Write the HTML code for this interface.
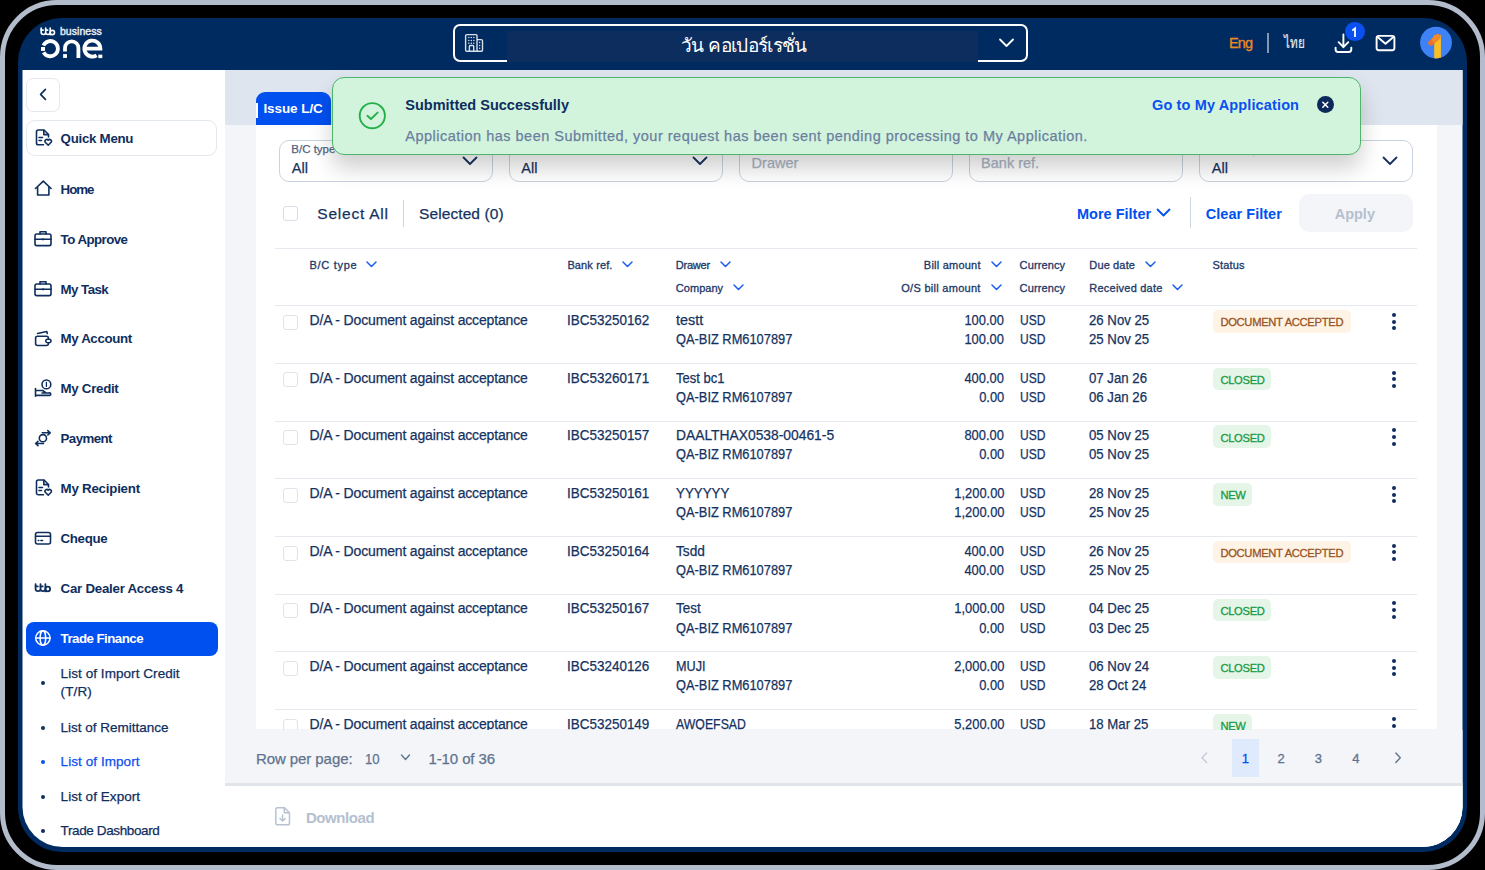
<!DOCTYPE html>
<html><head><meta charset="utf-8"><style>
html,body{margin:0;padding:0;width:1485px;height:870px;overflow:hidden;background:#000}
body{position:relative;font-family:"Liberation Sans",sans-serif}
.t,.tc{position:absolute;white-space:nowrap;line-height:1}
</style></head><body>
<div style="position:absolute;left:0;top:0;width:1485px;height:870px;box-sizing:border-box;border:5px solid #b2bccb;border-radius:57px;background:#000"></div>
<div style="position:absolute;left:18px;top:18px;width:1449px;height:834px;border-radius:44px;background:#002b60"></div>
<svg style="position:absolute;left:36px;top:24px" width="70" height="38" viewBox="36 24 70 38">
<g fill="none" stroke="#fff" stroke-width="3.8">
<path d="M43.38 45.5 A7.6 7.6 0 1 1 43.63 52.3"/>
<path d="M65 51.6 V48 A6.7 6.7 0 0 1 78.4 48 V57.9"/>
<path d="M86 48.6 H100.4 A8 8 0 1 0 96.6 55.4"/>
</g>
<g fill="#fff">
<rect x="41" y="47" width="4" height="3.9"/>
<rect x="63.1" y="54.1" width="3.9" height="3.8"/>
<rect x="98.3" y="54.6" width="4" height="3.5"/>
</g>
</svg>
<svg style="position:absolute;left:38px;top:25px" width="22" height="14" viewBox="38 25 22 14" fill="none" stroke="#fff" stroke-width="1.75" stroke-linecap="round"><g transform="translate(40.45 27.9) scale(0.92)"><path d="M0.8 0.2 V5 A2.45 2.1 0 0 0 5.7 5 V0.2 M5.7 5 A2.45 2.1 0 0 0 10.6 5 V0.2 M10.6 0.2 V7.4"/><circle cx="12.95" cy="5" r="2.35"/><path d="M0.8 2.4 H3 M5.7 2.4 H7.9"/></g></svg>
<div class="t" style="top:26.21px;font-size:10.5px;font-weight:400;color:#e8edf5;letter-spacing:0.032px;left:60.00px;-webkit-text-stroke:0.4px #e8edf5;">business</div>
<div style="position:absolute;left:453px;top:24px;width:575px;height:38px;box-sizing:border-box;border:2px solid #fff;border-radius:7px"></div>
<div style="position:absolute;left:507px;top:31px;width:471px;height:31px;background:#0c2d5d;"></div>
<svg style="position:absolute;left:460px;top:30px" width="28" height="26" viewBox="460 30 28 26" fill="none" stroke="#d9dfe9" stroke-width="1.4" stroke-linejoin="round">
<path d="M477 51.3 H466.8 A1.2 1.2 0 0 1 465.6 50.1 V35.8 A1.2 1.2 0 0 1 466.8 34.6 H475.8 A1.2 1.2 0 0 1 477 35.8 Z"/>
<path d="M477 39.6 H481.3 A1.2 1.2 0 0 1 482.5 40.8 V50.1 A1.2 1.2 0 0 1 481.3 51.3 H477"/>
<path d="M469.4 51.3 V46.3 A0.8 0.8 0 0 1 470.2 45.5 H472.9 A0.8 0.8 0 0 1 473.7 46.3 V51.3"/>
<g fill="#d9dfe9" stroke="none">
<circle cx="468.8" cy="37.6" r="0.75"/><circle cx="471.3" cy="37.6" r="0.75"/><circle cx="473.8" cy="37.6" r="0.75"/>
<circle cx="468.8" cy="40.4" r="0.75"/><circle cx="471.3" cy="40.4" r="0.75"/><circle cx="473.8" cy="40.4" r="0.75"/>
<circle cx="468.8" cy="43.2" r="0.75"/><circle cx="471.3" cy="43.2" r="0.75"/><circle cx="473.8" cy="43.2" r="0.75"/>
<circle cx="479.6" cy="42.5" r="0.75"/><circle cx="479.6" cy="45.4" r="0.75"/><circle cx="479.6" cy="48.3" r="0.75"/>
</g></svg>
<div class="t" style="top:36.42px;font-size:19px;font-weight:400;color:#fff;letter-spacing:-0.667px;left:681.00px;">วัน คอเปอร์เรชั่น</div>
<svg style="position:absolute;left:998px;top:37px" width="17" height="12" viewBox="0 0 17 12"><path d="M2 2.5 L8.5 9 L15 2.5" fill="none" stroke="#fff" stroke-width="1.8" stroke-linecap="round" stroke-linejoin="round"/></svg>
<div class="t" style="top:36.03px;font-size:14.5px;font-weight:400;color:#ec8a26;letter-spacing:-0.900px;left:1229.00px;-webkit-text-stroke:0.3px #ec8a26;">Eng</div>
<div style="position:absolute;left:1267.3px;top:32.5px;width:1.5px;height:20px;background:#8596b0;"></div>
<div class="t" style="top:35.18px;font-size:15.5px;font-weight:400;color:#e3e8f0;left:1284.00px;-webkit-text-stroke:0.2px #e3e8f0;transform:scaleX(0.7549);transform-origin:0 0;">ไทย</div>
<svg style="position:absolute;left:1330px;top:30px" width="26" height="26" viewBox="1330 30 26 26" fill="none" stroke="#fff" stroke-width="1.9" stroke-linecap="round" stroke-linejoin="round">
<path d="M1343.4 34.5 V47.2 M1338.6 42.2 L1343.4 47.2 L1348.3 42.2"/><path d="M1335.6 47.6 V49.6 A2.4 2.4 0 0 0 1338 52 H1348.9 A2.4 2.4 0 0 0 1351.3 49.6 V47.6"/></svg>
<div style="position:absolute;left:1345.2px;top:22.1px;width:19.4px;height:19.4px;border-radius:50%;background:#0a50f0"></div>
<svg style="position:absolute;left:1348px;top:25px" width="12" height="14" viewBox="1348 25 12 14"><path d="M1353 29.9 L1355 28.4 V36" fill="none" stroke="#fff" stroke-width="1.8" stroke-linecap="square" stroke-linejoin="miter"/></svg>
<svg style="position:absolute;left:1372px;top:31px" width="27" height="24" viewBox="1372 31 27 24" fill="none" stroke="#fff" stroke-width="1.9" stroke-linejoin="round">
<rect x="1376.6" y="35.9" width="17.8" height="14.4" rx="2.2"/><path d="M1377.6 37 L1385.5 43.8 L1393.4 37" stroke-linecap="round"/></svg>
<svg style="position:absolute;left:1419px;top:26px" width="34" height="34" viewBox="0 0 34 34">
<defs><clipPath id="av"><circle cx="17" cy="16.6" r="15.9"/></clipPath></defs>
<circle cx="17" cy="16.6" r="15.9" fill="#3f82f7"/>
<g clip-path="url(#av)">
<rect x="15.2" y="9" width="6.7" height="26" fill="#fbbf24"/>
<path d="M11.8 17 L18.8 10.8" stroke="#ec6f2d" stroke-width="5.2" stroke-linecap="round"/>
<path d="M15.2 13.8 L18.8 10.8" stroke="#f08a2a" stroke-width="5.2" stroke-linecap="round"/>
</g></svg>
<div style="position:absolute;left:0;top:0;width:1485px;height:870px;clip-path:inset(70px 22.5px 23px 22.5px round 0 0 40px 40px)">
<div style="position:absolute;left:0px;top:0px;width:225px;height:870px;background:#fff;"></div>
<div style="position:absolute;left:225px;top:70px;width:1260px;height:800px;background:#f3f5f8;"></div>
<div style="position:absolute;left:225px;top:70px;width:1260px;height:54.5px;background:#dfe5ee;"></div>
<div style="position:absolute;left:26px;top:77.5px;width:34px;height:34px;box-sizing:border-box;border:1px solid #e3e8ef;border-radius:7px"></div>
<svg style="position:absolute;left:36px;top:86px" width="14" height="16" viewBox="36 86 14 16"><path d="M45.4 89.4 L40.6 94.3 L45.4 99.3" fill="none" stroke="#0f2e5e" stroke-width="1.7" stroke-linecap="round" stroke-linejoin="round"/></svg>
<div style="position:absolute;left:26px;top:120px;width:191px;height:36px;box-sizing:border-box;border:1px solid #e3e8ef;border-radius:9px"></div>
<svg style="position:absolute;left:33px;top:128px" width="22" height="20" viewBox="33 128 22 20" fill="none" stroke="#0f2e5e" stroke-width="1.6" stroke-linecap="round" stroke-linejoin="round"><path d="M43.5 144.8 H38.3 A1.8 1.8 0 0 1 36.5 143 V131.8 A1.8 1.8 0 0 1 38.3 130 H44 L48.5 134.5 V137"/>
<path d="M43.8 130.2 V134.6 H48.3"/><path d="M39 137.5 H42.5 M39 140.5 H41.5"/>
<path d="M48.2 145.2 L45.3 142.3 A1.7 1.7 0 0 1 48.2 140.2 A1.7 1.7 0 0 1 51.1 142.3 Z"/></svg>
<svg style="position:absolute;left:33px;top:178px" width="22" height="20" viewBox="33 178 22 20" fill="none" stroke="#0f2e5e" stroke-width="1.6" stroke-linecap="round" stroke-linejoin="round"><path d="M35.5 188.5 L43.3 181.2 L51.1 188.5"/><path d="M37.6 187.2 V195 H48.9 V187.2"/></svg>
<svg style="position:absolute;left:32px;top:229px" width="22" height="20" viewBox="32 229 22 20" fill="none" stroke="#0f2e5e" stroke-width="1.6" stroke-linecap="round" stroke-linejoin="round"><rect x="35" y="234" width="16" height="11.6" rx="1.8"/><path d="M40 234 V231.8 H46 V234"/><path d="M35 239.2 H51"/><path d="M42.3 239.3 H43.7" stroke-width="1.8"/></svg>
<svg style="position:absolute;left:32px;top:279px" width="22" height="20" viewBox="32 279 22 20" fill="none" stroke="#0f2e5e" stroke-width="1.6" stroke-linecap="round" stroke-linejoin="round"><rect x="35" y="284" width="16" height="11.6" rx="1.8"/><path d="M40 284 V281.8 H46 V284"/><path d="M35 289.2 H51"/><path d="M42.3 289.3 H43.7" stroke-width="1.8"/></svg>
<svg style="position:absolute;left:32px;top:328px" width="22" height="20" viewBox="32 328 22 20" fill="none" stroke="#0f2e5e" stroke-width="1.6" stroke-linecap="round" stroke-linejoin="round"><rect x="35.6" y="336.2" width="12.8" height="9.3" rx="2"/><rect x="45.8" y="339.3" width="5.2" height="3.4" rx="1.7" fill="#fff"/><path d="M37.6 333.5 L46.8 331.5 L47.3 333.5"/></svg>
<svg style="position:absolute;left:32px;top:377px" width="22" height="22" viewBox="32 377 22 22" fill="none" stroke="#0f2e5e" stroke-width="1.6" stroke-linecap="round" stroke-linejoin="round"><circle cx="46.4" cy="384.4" r="4.4"/><path d="M46.4 382.4 V386.4" stroke-width="1.3"/><path d="M35.5 388.5 V396.3 M35.5 390.5 H42.6 L46 393 H48.8 A1.3 1.3 0 0 1 50 395.4 H35.5 M42 393 H46"/></svg>
<svg style="position:absolute;left:32px;top:428px" width="22" height="20" viewBox="32 428 22 20" fill="none" stroke="#0f2e5e" stroke-width="1.6" stroke-linecap="round" stroke-linejoin="round"><circle cx="42.9" cy="438.2" r="3.6"/><path d="M42.3 432.8 H50 M47.8 430.6 L50.2 432.8 L47.8 435 M43.5 443.5 H35.8 M38 441.3 L35.6 443.5 L38 445.7"/></svg>
<svg style="position:absolute;left:33px;top:478px" width="22" height="20" viewBox="33 478 22 20" fill="none" stroke="#0f2e5e" stroke-width="1.6" stroke-linecap="round" stroke-linejoin="round"><path d="M43.5 494.8 H38.3 A1.8 1.8 0 0 1 36.5 493 V481.8 A1.8 1.8 0 0 1 38.3 480 H44 L48.5 484.5 V487"/>
<path d="M43.8 480.2 V484.6 H48.3"/><path d="M39 487.5 H42.5 M39 490.5 H41.5"/>
<path d="M48.2 495.2 L45.3 492.3 A1.7 1.7 0 0 1 48.2 490.2 A1.7 1.7 0 0 1 51.1 492.3 Z"/></svg>
<svg style="position:absolute;left:32px;top:530px" width="22" height="17" viewBox="32 530 22 17" fill="none" stroke="#0f2e5e" stroke-width="1.6" stroke-linecap="round" stroke-linejoin="round"><rect x="35.5" y="532.5" width="15" height="11.5" rx="2"/><path d="M35.6 536.3 H50.4"/><path d="M38.2 540.5 H38.8 M40.8 540.5 H42.6" stroke-width="1.4"/></svg>
<svg style="position:absolute;left:32px;top:581px" width="22" height="14" viewBox="32 581 22 14" fill="none" stroke="#0f2e5e" stroke-width="1.8" stroke-linecap="round" stroke-linejoin="round"><path d="M35.6 584.2 V589 A2.45 2.1 0 0 0 40.5 589 V584.2 M40.5 589 A2.45 2.1 0 0 0 45.4 589 V584.2 M45.4 584.2 V591.4"/><circle cx="47.75" cy="589" r="2.35"/><path d="M35.6 586.4 H37.8 M40.5 586.4 H42.7"/></svg>
<div style="position:absolute;left:25.5px;top:621.5px;width:192px;height:34.5px;border-radius:8px;background:#0050f0"></div>
<svg style="position:absolute;left:33px;top:628px" width="20" height="20" viewBox="33 628 20 20" fill="none" stroke="#fff" stroke-width="1.5" stroke-linecap="round" stroke-linejoin="round"><circle cx="42.9" cy="638" r="7.2"/><ellipse cx="42.9" cy="638" rx="2.8" ry="7.2"/><path d="M35.8 638 H50"/></svg>
<div class="t" style="top:131.74px;font-size:13.3px;font-weight:700;color:#0f2e5e;letter-spacing:-0.277px;left:60.60px;">Quick Menu</div>
<div class="t" style="top:182.74px;font-size:13.3px;font-weight:700;color:#0f2e5e;letter-spacing:-1.070px;left:60.60px;">Home</div>
<div class="t" style="top:233.14px;font-size:13.3px;font-weight:700;color:#0f2e5e;letter-spacing:-0.555px;left:60.60px;">To Approve</div>
<div class="t" style="top:282.94px;font-size:13.3px;font-weight:700;color:#0f2e5e;letter-spacing:-0.561px;left:60.60px;">My Task</div>
<div class="t" style="top:332.44px;font-size:13.3px;font-weight:700;color:#0f2e5e;letter-spacing:-0.376px;left:60.60px;">My Account</div>
<div class="t" style="top:382.44px;font-size:13.3px;font-weight:700;color:#0f2e5e;letter-spacing:-0.300px;left:60.60px;">My Credit</div>
<div class="t" style="top:432.14px;font-size:13.3px;font-weight:700;color:#0f2e5e;letter-spacing:-0.606px;left:60.60px;">Payment</div>
<div class="t" style="top:482.44px;font-size:13.3px;font-weight:700;color:#0f2e5e;letter-spacing:-0.230px;left:60.60px;">My Recipient</div>
<div class="t" style="top:532.44px;font-size:13.3px;font-weight:700;color:#0f2e5e;letter-spacing:-0.360px;left:60.60px;">Cheque</div>
<div class="t" style="top:582.44px;font-size:13.3px;font-weight:700;color:#0f2e5e;letter-spacing:-0.257px;left:60.60px;">Car Dealer Access 4</div>
<div class="t" style="top:632.14px;font-size:13.3px;font-weight:700;color:#fff;letter-spacing:-0.539px;left:60.60px;">Trade Finance</div>
<div class="t" style="top:667.17px;font-size:13.5px;font-weight:400;color:#0f2e5e;letter-spacing:0.060px;left:60.60px;-webkit-text-stroke:0.25px #0f2e5e;">List of Import Credit</div>
<div class="t" style="top:685.37px;font-size:13.5px;font-weight:400;color:#0f2e5e;letter-spacing:0.100px;left:60.60px;-webkit-text-stroke:0.25px #0f2e5e;">(T/R)</div>
<div class="t" style="top:720.87px;font-size:13.5px;font-weight:400;color:#0f2e5e;letter-spacing:-0.005px;left:60.60px;-webkit-text-stroke:0.25px #0f2e5e;">List of Remittance</div>
<div class="t" style="top:755.37px;font-size:13.5px;font-weight:400;color:#0a50f0;letter-spacing:0.065px;left:60.60px;-webkit-text-stroke:0.25px #0a50f0;">List of Import</div>
<div class="t" style="top:789.57px;font-size:13.5px;font-weight:400;color:#0f2e5e;letter-spacing:0.053px;left:60.60px;-webkit-text-stroke:0.25px #0f2e5e;">List of Export</div>
<div class="t" style="top:824.17px;font-size:13.5px;font-weight:400;color:#0f2e5e;letter-spacing:-0.382px;left:60.60px;-webkit-text-stroke:0.25px #0f2e5e;">Trade Dashboard</div>
<div style="position:absolute;left:41px;top:681px;width:4px;height:4px;border-radius:50%;background:#0f2e5e"></div>
<div style="position:absolute;left:41px;top:725.5px;width:4px;height:4px;border-radius:50%;background:#0f2e5e"></div>
<div style="position:absolute;left:41px;top:760px;width:4px;height:4px;border-radius:50%;background:#0a50f0"></div>
<div style="position:absolute;left:41px;top:794.5px;width:4px;height:4px;border-radius:50%;background:#0f2e5e"></div>
<div style="position:absolute;left:41px;top:829px;width:4px;height:4px;border-radius:50%;background:#0f2e5e"></div>
<div style="position:absolute;left:255.5px;top:92px;width:75px;height:33px;border-radius:9px 9px 0 0;background:#0050f0"></div>
<div style="position:absolute;left:255.5px;top:103px;width:2px;height:15px;background:#fff;"></div>
<div class="t" style="top:101.57px;font-size:13.5px;font-weight:600;color:#fff;letter-spacing:-0.075px;left:263.40px;">Issue L/C</div>
<div style="position:absolute;left:255.5px;top:124.5px;width:1181px;height:604.5px;background:#fff;"></div>
<div style="position:absolute;left:279px;top:140px;width:214px;height:42px;box-sizing:border-box;border:1px solid #c9d2de;border-radius:10px"></div>
<div class="t" style="top:143.67px;font-size:11.5px;font-weight:400;color:#52637e;left:291.30px;-webkit-text-stroke:0.25px #52637e;">B/C type</div>
<div class="t" style="top:161.13px;font-size:14.5px;font-weight:400;color:#15325f;left:291.80px;-webkit-text-stroke:0.25px #15325f;">All</div>
<svg style="position:absolute;left:462px;top:155px" width="16" height="12" viewBox="462 155 16 12" fill="none" stroke="#15325f" stroke-width="1.8" stroke-linecap="round" stroke-linejoin="round"><path d="M463.5 157.5 L470 164 L476.5 157.5"/></svg>
<div style="position:absolute;left:508.5px;top:140px;width:214.5px;height:42px;box-sizing:border-box;border:1px solid #c9d2de;border-radius:10px"></div>
<div class="t" style="top:143.67px;font-size:11.5px;font-weight:400;color:#52637e;left:520.80px;-webkit-text-stroke:0.25px #52637e;">Status</div>
<div class="t" style="top:161.13px;font-size:14.5px;font-weight:400;color:#15325f;left:521.30px;-webkit-text-stroke:0.25px #15325f;">All</div>
<svg style="position:absolute;left:692px;top:155px" width="16" height="12" viewBox="692 155 16 12" fill="none" stroke="#15325f" stroke-width="1.8" stroke-linecap="round" stroke-linejoin="round"><path d="M693.5 157.5 L700 164 L706.5 157.5"/></svg>
<div style="position:absolute;left:739px;top:140px;width:214px;height:42px;box-sizing:border-box;border:1px solid #c9d2de;border-radius:10px"></div>
<div class="t" style="top:155.93px;font-size:14.5px;font-weight:400;color:#a9b4c4;left:751.60px;-webkit-text-stroke:0.25px #a9b4c4;">Drawer</div>
<div style="position:absolute;left:968.5px;top:140px;width:214.5px;height:42px;box-sizing:border-box;border:1px solid #c9d2de;border-radius:10px"></div>
<div class="t" style="top:155.93px;font-size:14.5px;font-weight:400;color:#a9b4c4;left:981.10px;-webkit-text-stroke:0.25px #a9b4c4;">Bank ref.</div>
<div style="position:absolute;left:1199px;top:140px;width:214px;height:42px;box-sizing:border-box;border:1px solid #c9d2de;border-radius:10px"></div>
<div class="t" style="top:143.67px;font-size:11.5px;font-weight:400;color:#52637e;left:1211.30px;-webkit-text-stroke:0.25px #52637e;">Currency</div>
<div class="t" style="top:161.13px;font-size:14.5px;font-weight:400;color:#15325f;left:1211.80px;-webkit-text-stroke:0.25px #15325f;">All</div>
<svg style="position:absolute;left:1382px;top:155px" width="16" height="12" viewBox="1382 155 16 12" fill="none" stroke="#15325f" stroke-width="1.8" stroke-linecap="round" stroke-linejoin="round"><path d="M1383.5 157.5 L1390 164 L1396.5 157.5"/></svg>
<div style="position:absolute;left:282.5px;top:205.5px;width:15px;height:15px;box-sizing:border-box;border:1.5px solid #d6dee8;border-radius:3px"></div>
<div class="t" style="top:205.88px;font-size:15.5px;font-weight:400;color:#15325f;letter-spacing:0.765px;left:317.30px;-webkit-text-stroke:0.25px #15325f;">Select All</div>
<div style="position:absolute;left:403px;top:199.5px;width:1px;height:27px;background:#cfd7e2;"></div>
<div class="t" style="top:205.88px;font-size:15.5px;font-weight:400;color:#15325f;letter-spacing:0.091px;left:419.00px;-webkit-text-stroke:0.25px #15325f;">Selected (0)</div>
<div class="t" style="top:206.93px;font-size:14.5px;font-weight:700;color:#0050f0;left:1077.00px;">More Filter</div>
<svg style="position:absolute;left:1154px;top:205px" width="20" height="14" viewBox="1154 205 20 14" fill="none" stroke="#0050f0" stroke-width="1.8" stroke-linecap="round" stroke-linejoin="round"><path d="M1157.5 209.5 L1163.5 215.5 L1169.5 209.5"/></svg>
<div style="position:absolute;left:1190px;top:197px;width:1px;height:31px;background:#cfd7e2;"></div>
<div class="t" style="top:206.93px;font-size:14.5px;font-weight:700;color:#0050f0;letter-spacing:0.025px;left:1205.80px;">Clear Filter</div>
<div style="position:absolute;left:1298.5px;top:194px;width:114.5px;height:38px;border-radius:10px;background:#f3f5f8"></div>
<div class="t" style="top:206.93px;font-size:14.5px;font-weight:700;color:#b5c0cf;left:1334.70px;">Apply</div>
<div style="position:absolute;left:275px;top:247.5px;width:1142px;height:1px;background:#e6eaf0;"></div>
<div style="position:absolute;left:275px;top:305px;width:1142px;height:1px;background:#e6eaf0;"></div>
<div class="t" style="top:259.89px;font-size:11px;font-weight:400;color:#1c3867;letter-spacing:0.713px;left:309.50px;-webkit-text-stroke:0.3px #1c3867;">B/C type</div>
<svg style="position:absolute;left:366px;top:259.2px" width="12" height="10" viewBox="366 259.2 12 10" fill="none" stroke="#1d5ef0" stroke-width="1.5" stroke-linecap="round" stroke-linejoin="round"><path d="M367 262.2 L371.5 266.7 L376 262.2"/></svg>
<div class="t" style="top:259.89px;font-size:11px;font-weight:400;color:#1c3867;letter-spacing:0.126px;left:567.40px;-webkit-text-stroke:0.3px #1c3867;">Bank ref.</div>
<svg style="position:absolute;left:622px;top:259.2px" width="12" height="10" viewBox="622 259.2 12 10" fill="none" stroke="#1d5ef0" stroke-width="1.5" stroke-linecap="round" stroke-linejoin="round"><path d="M623 262.2 L627.5 266.7 L632 262.2"/></svg>
<div class="t" style="top:259.89px;font-size:11px;font-weight:400;color:#1c3867;letter-spacing:-0.240px;left:675.80px;-webkit-text-stroke:0.3px #1c3867;">Drawer</div>
<svg style="position:absolute;left:720px;top:259.2px" width="12" height="10" viewBox="720 259.2 12 10" fill="none" stroke="#1d5ef0" stroke-width="1.5" stroke-linecap="round" stroke-linejoin="round"><path d="M721 262.2 L725.5 266.7 L730 262.2"/></svg>
<div class="t" style="top:282.99px;font-size:11px;font-weight:400;color:#1c3867;letter-spacing:0.039px;left:675.80px;-webkit-text-stroke:0.3px #1c3867;">Company</div>
<svg style="position:absolute;left:733px;top:282.3px" width="12" height="10" viewBox="733 282.3 12 10" fill="none" stroke="#1d5ef0" stroke-width="1.5" stroke-linecap="round" stroke-linejoin="round"><path d="M734 285.3 L738.5 289.8 L743 285.3"/></svg>
<div class="t" style="top:259.89px;font-size:11px;font-weight:400;color:#1c3867;letter-spacing:0.220px;right:504.30px;-webkit-text-stroke:0.3px #1c3867;">Bill amount</div>
<svg style="position:absolute;left:991px;top:259.2px" width="12" height="10" viewBox="991 259.2 12 10" fill="none" stroke="#1d5ef0" stroke-width="1.5" stroke-linecap="round" stroke-linejoin="round"><path d="M992 262.2 L996.5 266.7 L1001 262.2"/></svg>
<div class="t" style="top:282.99px;font-size:11px;font-weight:400;color:#1c3867;letter-spacing:0.281px;right:504.30px;-webkit-text-stroke:0.3px #1c3867;">O/S bill amount</div>
<svg style="position:absolute;left:991px;top:282.3px" width="12" height="10" viewBox="991 282.3 12 10" fill="none" stroke="#1d5ef0" stroke-width="1.5" stroke-linecap="round" stroke-linejoin="round"><path d="M992 285.3 L996.5 289.8 L1001 285.3"/></svg>
<div class="t" style="top:259.89px;font-size:11px;font-weight:400;color:#1c3867;letter-spacing:0.111px;left:1019.60px;-webkit-text-stroke:0.3px #1c3867;">Currency</div>
<div class="t" style="top:282.99px;font-size:11px;font-weight:400;color:#1c3867;letter-spacing:0.111px;left:1019.60px;-webkit-text-stroke:0.3px #1c3867;">Currency</div>
<div class="t" style="top:259.89px;font-size:11px;font-weight:400;color:#1c3867;letter-spacing:0.144px;left:1089.30px;-webkit-text-stroke:0.3px #1c3867;">Due date</div>
<svg style="position:absolute;left:1145px;top:259.2px" width="12" height="10" viewBox="1145 259.2 12 10" fill="none" stroke="#1d5ef0" stroke-width="1.5" stroke-linecap="round" stroke-linejoin="round"><path d="M1146 262.2 L1150.5 266.7 L1155 262.2"/></svg>
<div class="t" style="top:282.99px;font-size:11px;font-weight:400;color:#1c3867;letter-spacing:0.227px;left:1089.30px;-webkit-text-stroke:0.3px #1c3867;">Received date</div>
<svg style="position:absolute;left:1172px;top:282.3px" width="12" height="10" viewBox="1172 282.3 12 10" fill="none" stroke="#1d5ef0" stroke-width="1.5" stroke-linecap="round" stroke-linejoin="round"><path d="M1173 285.3 L1177.5 289.8 L1182 285.3"/></svg>
<div class="t" style="top:259.89px;font-size:11px;font-weight:400;color:#1c3867;letter-spacing:0.160px;left:1212.60px;-webkit-text-stroke:0.3px #1c3867;">Status</div>
<div style="position:absolute;left:275px;top:362.8px;width:1142px;height:1px;background:#e6eaf0;"></div>
<div style="position:absolute;left:282.5px;top:314.6px;width:15px;height:15px;box-sizing:border-box;border:1.5px solid #dde4ec;border-radius:3px"></div>
<div class="t" style="top:312.85px;font-size:14px;font-weight:400;color:#15325f;letter-spacing:-0.156px;left:309.50px;-webkit-text-stroke:0.25px #15325f;">D/A - Document against acceptance</div>
<div class="t" style="top:312.85px;font-size:14px;font-weight:400;color:#15325f;left:567.40px;-webkit-text-stroke:0.25px #15325f;transform:scaleX(0.9617);transform-origin:0 0;">IBC53250162</div>
<div class="t" style="top:312.85px;font-size:14px;font-weight:400;color:#15325f;left:675.80px;-webkit-text-stroke:0.25px #15325f;transform:scaleX(1.0248);transform-origin:0 0;">testt</div>
<div class="t" style="top:332.05px;font-size:14px;font-weight:400;color:#15325f;left:675.80px;-webkit-text-stroke:0.25px #15325f;transform:scaleX(0.9169);transform-origin:0 0;">QA-BIZ RM6107897</div>
<div class="t" style="top:312.85px;font-size:14px;font-weight:400;color:#15325f;right:481.00px;-webkit-text-stroke:0.25px #15325f;transform:scaleX(0.9206);transform-origin:100% 0;">100.00</div>
<div class="t" style="top:332.05px;font-size:14px;font-weight:400;color:#15325f;right:481.00px;-webkit-text-stroke:0.25px #15325f;transform:scaleX(0.9206);transform-origin:100% 0;">100.00</div>
<div class="t" style="top:312.85px;font-size:14px;font-weight:400;color:#15325f;left:1019.60px;-webkit-text-stroke:0.25px #15325f;transform:scaleX(0.8597);transform-origin:0 0;">USD</div>
<div class="t" style="top:332.05px;font-size:14px;font-weight:400;color:#15325f;left:1019.60px;-webkit-text-stroke:0.25px #15325f;transform:scaleX(0.8597);transform-origin:0 0;">USD</div>
<div class="t" style="top:312.85px;font-size:14px;font-weight:400;color:#15325f;left:1089.30px;-webkit-text-stroke:0.25px #15325f;transform:scaleX(0.9431);transform-origin:0 0;">26 Nov 25</div>
<div class="t" style="top:332.05px;font-size:14px;font-weight:400;color:#15325f;left:1089.30px;-webkit-text-stroke:0.25px #15325f;transform:scaleX(0.9431);transform-origin:0 0;">25 Nov 25</div>
<div style="position:absolute;left:1213px;top:310.0px;width:137.8px;height:22.6px;border-radius:5px;background:#fef3e4"></div>
<div class="t" style="top:317.12px;font-size:11.2px;font-weight:400;color:#9b5424;letter-spacing:-0.297px;left:1220.40px;-webkit-text-stroke:0.3px #9b5424;">DOCUMENT ACCEPTED</div>
<div style="position:absolute;left:1392px;top:312.8px;width:4.1px;height:4.1px;border-radius:50%;background:#0f2e5e"></div>
<div style="position:absolute;left:1392px;top:319.5px;width:4.1px;height:4.1px;border-radius:50%;background:#0f2e5e"></div>
<div style="position:absolute;left:1392px;top:326.1px;width:4.1px;height:4.1px;border-radius:50%;background:#0f2e5e"></div>
<div style="position:absolute;left:275px;top:420.5px;width:1142px;height:1px;background:#e6eaf0;"></div>
<div style="position:absolute;left:282.5px;top:372.3px;width:15px;height:15px;box-sizing:border-box;border:1.5px solid #dde4ec;border-radius:3px"></div>
<div class="t" style="top:370.57px;font-size:14px;font-weight:400;color:#15325f;letter-spacing:-0.156px;left:309.50px;-webkit-text-stroke:0.25px #15325f;">D/A - Document against acceptance</div>
<div class="t" style="top:370.57px;font-size:14px;font-weight:400;color:#15325f;left:567.40px;-webkit-text-stroke:0.25px #15325f;transform:scaleX(0.9617);transform-origin:0 0;">IBC53260171</div>
<div class="t" style="top:370.57px;font-size:14px;font-weight:400;color:#15325f;left:675.80px;-webkit-text-stroke:0.25px #15325f;transform:scaleX(0.9299);transform-origin:0 0;">Test bc1</div>
<div class="t" style="top:389.77px;font-size:14px;font-weight:400;color:#15325f;left:675.80px;-webkit-text-stroke:0.25px #15325f;transform:scaleX(0.9169);transform-origin:0 0;">QA-BIZ RM6107897</div>
<div class="t" style="top:370.57px;font-size:14px;font-weight:400;color:#15325f;right:481.00px;-webkit-text-stroke:0.25px #15325f;transform:scaleX(0.9206);transform-origin:100% 0;">400.00</div>
<div class="t" style="top:389.77px;font-size:14px;font-weight:400;color:#15325f;right:481.00px;-webkit-text-stroke:0.25px #15325f;transform:scaleX(0.9206);transform-origin:100% 0;">0.00</div>
<div class="t" style="top:370.57px;font-size:14px;font-weight:400;color:#15325f;left:1019.60px;-webkit-text-stroke:0.25px #15325f;transform:scaleX(0.8597);transform-origin:0 0;">USD</div>
<div class="t" style="top:389.77px;font-size:14px;font-weight:400;color:#15325f;left:1019.60px;-webkit-text-stroke:0.25px #15325f;transform:scaleX(0.8597);transform-origin:0 0;">USD</div>
<div class="t" style="top:370.57px;font-size:14px;font-weight:400;color:#15325f;left:1089.30px;-webkit-text-stroke:0.25px #15325f;transform:scaleX(0.9431);transform-origin:0 0;">07 Jan 26</div>
<div class="t" style="top:389.77px;font-size:14px;font-weight:400;color:#15325f;left:1089.30px;-webkit-text-stroke:0.25px #15325f;transform:scaleX(0.9431);transform-origin:0 0;">06 Jan 26</div>
<div style="position:absolute;left:1213px;top:367.7px;width:58.4px;height:22.6px;border-radius:5px;background:#e5f6e9"></div>
<div class="t" style="top:374.84px;font-size:11.2px;font-weight:400;color:#1b9a43;letter-spacing:-0.297px;left:1220.40px;-webkit-text-stroke:0.3px #1b9a43;">CLOSED</div>
<div style="position:absolute;left:1392px;top:370.5px;width:4.1px;height:4.1px;border-radius:50%;background:#0f2e5e"></div>
<div style="position:absolute;left:1392px;top:377.2px;width:4.1px;height:4.1px;border-radius:50%;background:#0f2e5e"></div>
<div style="position:absolute;left:1392px;top:383.8px;width:4.1px;height:4.1px;border-radius:50%;background:#0f2e5e"></div>
<div style="position:absolute;left:275px;top:478.3px;width:1142px;height:1px;background:#e6eaf0;"></div>
<div style="position:absolute;left:282.5px;top:430.0px;width:15px;height:15px;box-sizing:border-box;border:1.5px solid #dde4ec;border-radius:3px"></div>
<div class="t" style="top:428.29px;font-size:14px;font-weight:400;color:#15325f;letter-spacing:-0.156px;left:309.50px;-webkit-text-stroke:0.25px #15325f;">D/A - Document against acceptance</div>
<div class="t" style="top:428.29px;font-size:14px;font-weight:400;color:#15325f;left:567.40px;-webkit-text-stroke:0.25px #15325f;transform:scaleX(0.9617);transform-origin:0 0;">IBC53250157</div>
<div class="t" style="top:428.29px;font-size:14px;font-weight:400;color:#15325f;left:675.80px;-webkit-text-stroke:0.25px #15325f;transform:scaleX(0.9878);transform-origin:0 0;">DAALTHAX0538-00461-5</div>
<div class="t" style="top:447.49px;font-size:14px;font-weight:400;color:#15325f;left:675.80px;-webkit-text-stroke:0.25px #15325f;transform:scaleX(0.9169);transform-origin:0 0;">QA-BIZ RM6107897</div>
<div class="t" style="top:428.29px;font-size:14px;font-weight:400;color:#15325f;right:481.00px;-webkit-text-stroke:0.25px #15325f;transform:scaleX(0.9206);transform-origin:100% 0;">800.00</div>
<div class="t" style="top:447.49px;font-size:14px;font-weight:400;color:#15325f;right:481.00px;-webkit-text-stroke:0.25px #15325f;transform:scaleX(0.9206);transform-origin:100% 0;">0.00</div>
<div class="t" style="top:428.29px;font-size:14px;font-weight:400;color:#15325f;left:1019.60px;-webkit-text-stroke:0.25px #15325f;transform:scaleX(0.8597);transform-origin:0 0;">USD</div>
<div class="t" style="top:447.49px;font-size:14px;font-weight:400;color:#15325f;left:1019.60px;-webkit-text-stroke:0.25px #15325f;transform:scaleX(0.8597);transform-origin:0 0;">USD</div>
<div class="t" style="top:428.29px;font-size:14px;font-weight:400;color:#15325f;left:1089.30px;-webkit-text-stroke:0.25px #15325f;transform:scaleX(0.9431);transform-origin:0 0;">05 Nov 25</div>
<div class="t" style="top:447.49px;font-size:14px;font-weight:400;color:#15325f;left:1089.30px;-webkit-text-stroke:0.25px #15325f;transform:scaleX(0.9431);transform-origin:0 0;">05 Nov 25</div>
<div style="position:absolute;left:1213px;top:425.4px;width:58.4px;height:22.6px;border-radius:5px;background:#e5f6e9"></div>
<div class="t" style="top:432.56px;font-size:11.2px;font-weight:400;color:#1b9a43;letter-spacing:-0.297px;left:1220.40px;-webkit-text-stroke:0.3px #1b9a43;">CLOSED</div>
<div style="position:absolute;left:1392px;top:428.2px;width:4.1px;height:4.1px;border-radius:50%;background:#0f2e5e"></div>
<div style="position:absolute;left:1392px;top:434.9px;width:4.1px;height:4.1px;border-radius:50%;background:#0f2e5e"></div>
<div style="position:absolute;left:1392px;top:441.5px;width:4.1px;height:4.1px;border-radius:50%;background:#0f2e5e"></div>
<div style="position:absolute;left:275px;top:536.0px;width:1142px;height:1px;background:#e6eaf0;"></div>
<div style="position:absolute;left:282.5px;top:487.8px;width:15px;height:15px;box-sizing:border-box;border:1.5px solid #dde4ec;border-radius:3px"></div>
<div class="t" style="top:486.01px;font-size:14px;font-weight:400;color:#15325f;letter-spacing:-0.156px;left:309.50px;-webkit-text-stroke:0.25px #15325f;">D/A - Document against acceptance</div>
<div class="t" style="top:486.01px;font-size:14px;font-weight:400;color:#15325f;left:567.40px;-webkit-text-stroke:0.25px #15325f;transform:scaleX(0.9617);transform-origin:0 0;">IBC53250161</div>
<div class="t" style="top:486.01px;font-size:14px;font-weight:400;color:#15325f;left:675.80px;-webkit-text-stroke:0.25px #15325f;transform:scaleX(0.9511);transform-origin:0 0;">YYYYYY</div>
<div class="t" style="top:505.21px;font-size:14px;font-weight:400;color:#15325f;left:675.80px;-webkit-text-stroke:0.25px #15325f;transform:scaleX(0.9169);transform-origin:0 0;">QA-BIZ RM6107897</div>
<div class="t" style="top:486.01px;font-size:14px;font-weight:400;color:#15325f;right:481.00px;-webkit-text-stroke:0.25px #15325f;transform:scaleX(0.9206);transform-origin:100% 0;">1,200.00</div>
<div class="t" style="top:505.21px;font-size:14px;font-weight:400;color:#15325f;right:481.00px;-webkit-text-stroke:0.25px #15325f;transform:scaleX(0.9206);transform-origin:100% 0;">1,200.00</div>
<div class="t" style="top:486.01px;font-size:14px;font-weight:400;color:#15325f;left:1019.60px;-webkit-text-stroke:0.25px #15325f;transform:scaleX(0.8597);transform-origin:0 0;">USD</div>
<div class="t" style="top:505.21px;font-size:14px;font-weight:400;color:#15325f;left:1019.60px;-webkit-text-stroke:0.25px #15325f;transform:scaleX(0.8597);transform-origin:0 0;">USD</div>
<div class="t" style="top:486.01px;font-size:14px;font-weight:400;color:#15325f;left:1089.30px;-webkit-text-stroke:0.25px #15325f;transform:scaleX(0.9431);transform-origin:0 0;">28 Nov 25</div>
<div class="t" style="top:505.21px;font-size:14px;font-weight:400;color:#15325f;left:1089.30px;-webkit-text-stroke:0.25px #15325f;transform:scaleX(0.9431);transform-origin:0 0;">25 Nov 25</div>
<div style="position:absolute;left:1213px;top:483.2px;width:38.5px;height:22.6px;border-radius:5px;background:#e5f6e9"></div>
<div class="t" style="top:490.28px;font-size:11.2px;font-weight:400;color:#1b9a43;letter-spacing:-0.297px;left:1220.40px;-webkit-text-stroke:0.3px #1b9a43;">NEW</div>
<div style="position:absolute;left:1392px;top:486.0px;width:4.1px;height:4.1px;border-radius:50%;background:#0f2e5e"></div>
<div style="position:absolute;left:1392px;top:492.7px;width:4.1px;height:4.1px;border-radius:50%;background:#0f2e5e"></div>
<div style="position:absolute;left:1392px;top:499.3px;width:4.1px;height:4.1px;border-radius:50%;background:#0f2e5e"></div>
<div style="position:absolute;left:275px;top:593.7px;width:1142px;height:1px;background:#e6eaf0;"></div>
<div style="position:absolute;left:282.5px;top:545.5px;width:15px;height:15px;box-sizing:border-box;border:1.5px solid #dde4ec;border-radius:3px"></div>
<div class="t" style="top:543.73px;font-size:14px;font-weight:400;color:#15325f;letter-spacing:-0.156px;left:309.50px;-webkit-text-stroke:0.25px #15325f;">D/A - Document against acceptance</div>
<div class="t" style="top:543.73px;font-size:14px;font-weight:400;color:#15325f;left:567.40px;-webkit-text-stroke:0.25px #15325f;transform:scaleX(0.9617);transform-origin:0 0;">IBC53250164</div>
<div class="t" style="top:543.73px;font-size:14px;font-weight:400;color:#15325f;left:675.80px;-webkit-text-stroke:0.25px #15325f;transform:scaleX(0.9771);transform-origin:0 0;">Tsdd</div>
<div class="t" style="top:562.93px;font-size:14px;font-weight:400;color:#15325f;left:675.80px;-webkit-text-stroke:0.25px #15325f;transform:scaleX(0.9169);transform-origin:0 0;">QA-BIZ RM6107897</div>
<div class="t" style="top:543.73px;font-size:14px;font-weight:400;color:#15325f;right:481.00px;-webkit-text-stroke:0.25px #15325f;transform:scaleX(0.9206);transform-origin:100% 0;">400.00</div>
<div class="t" style="top:562.93px;font-size:14px;font-weight:400;color:#15325f;right:481.00px;-webkit-text-stroke:0.25px #15325f;transform:scaleX(0.9206);transform-origin:100% 0;">400.00</div>
<div class="t" style="top:543.73px;font-size:14px;font-weight:400;color:#15325f;left:1019.60px;-webkit-text-stroke:0.25px #15325f;transform:scaleX(0.8597);transform-origin:0 0;">USD</div>
<div class="t" style="top:562.93px;font-size:14px;font-weight:400;color:#15325f;left:1019.60px;-webkit-text-stroke:0.25px #15325f;transform:scaleX(0.8597);transform-origin:0 0;">USD</div>
<div class="t" style="top:543.73px;font-size:14px;font-weight:400;color:#15325f;left:1089.30px;-webkit-text-stroke:0.25px #15325f;transform:scaleX(0.9431);transform-origin:0 0;">26 Nov 25</div>
<div class="t" style="top:562.93px;font-size:14px;font-weight:400;color:#15325f;left:1089.30px;-webkit-text-stroke:0.25px #15325f;transform:scaleX(0.9431);transform-origin:0 0;">25 Nov 25</div>
<div style="position:absolute;left:1213px;top:540.9px;width:137.8px;height:22.6px;border-radius:5px;background:#fef3e4"></div>
<div class="t" style="top:548.00px;font-size:11.2px;font-weight:400;color:#9b5424;letter-spacing:-0.297px;left:1220.40px;-webkit-text-stroke:0.3px #9b5424;">DOCUMENT ACCEPTED</div>
<div style="position:absolute;left:1392px;top:543.7px;width:4.1px;height:4.1px;border-radius:50%;background:#0f2e5e"></div>
<div style="position:absolute;left:1392px;top:550.4px;width:4.1px;height:4.1px;border-radius:50%;background:#0f2e5e"></div>
<div style="position:absolute;left:1392px;top:557.0px;width:4.1px;height:4.1px;border-radius:50%;background:#0f2e5e"></div>
<div style="position:absolute;left:275px;top:651.4px;width:1142px;height:1px;background:#e6eaf0;"></div>
<div style="position:absolute;left:282.5px;top:603.2px;width:15px;height:15px;box-sizing:border-box;border:1.5px solid #dde4ec;border-radius:3px"></div>
<div class="t" style="top:601.45px;font-size:14px;font-weight:400;color:#15325f;letter-spacing:-0.156px;left:309.50px;-webkit-text-stroke:0.25px #15325f;">D/A - Document against acceptance</div>
<div class="t" style="top:601.45px;font-size:14px;font-weight:400;color:#15325f;left:567.40px;-webkit-text-stroke:0.25px #15325f;transform:scaleX(0.9617);transform-origin:0 0;">IBC53250167</div>
<div class="t" style="top:601.45px;font-size:14px;font-weight:400;color:#15325f;left:675.80px;-webkit-text-stroke:0.25px #15325f;transform:scaleX(0.9615);transform-origin:0 0;">Test</div>
<div class="t" style="top:620.65px;font-size:14px;font-weight:400;color:#15325f;left:675.80px;-webkit-text-stroke:0.25px #15325f;transform:scaleX(0.9169);transform-origin:0 0;">QA-BIZ RM6107897</div>
<div class="t" style="top:601.45px;font-size:14px;font-weight:400;color:#15325f;right:481.00px;-webkit-text-stroke:0.25px #15325f;transform:scaleX(0.9206);transform-origin:100% 0;">1,000.00</div>
<div class="t" style="top:620.65px;font-size:14px;font-weight:400;color:#15325f;right:481.00px;-webkit-text-stroke:0.25px #15325f;transform:scaleX(0.9206);transform-origin:100% 0;">0.00</div>
<div class="t" style="top:601.45px;font-size:14px;font-weight:400;color:#15325f;left:1019.60px;-webkit-text-stroke:0.25px #15325f;transform:scaleX(0.8597);transform-origin:0 0;">USD</div>
<div class="t" style="top:620.65px;font-size:14px;font-weight:400;color:#15325f;left:1019.60px;-webkit-text-stroke:0.25px #15325f;transform:scaleX(0.8597);transform-origin:0 0;">USD</div>
<div class="t" style="top:601.45px;font-size:14px;font-weight:400;color:#15325f;left:1089.30px;-webkit-text-stroke:0.25px #15325f;transform:scaleX(0.9431);transform-origin:0 0;">04 Dec 25</div>
<div class="t" style="top:620.65px;font-size:14px;font-weight:400;color:#15325f;left:1089.30px;-webkit-text-stroke:0.25px #15325f;transform:scaleX(0.9431);transform-origin:0 0;">03 Dec 25</div>
<div style="position:absolute;left:1213px;top:598.6px;width:58.4px;height:22.6px;border-radius:5px;background:#e5f6e9"></div>
<div class="t" style="top:605.72px;font-size:11.2px;font-weight:400;color:#1b9a43;letter-spacing:-0.297px;left:1220.40px;-webkit-text-stroke:0.3px #1b9a43;">CLOSED</div>
<div style="position:absolute;left:1392px;top:601.4px;width:4.1px;height:4.1px;border-radius:50%;background:#0f2e5e"></div>
<div style="position:absolute;left:1392px;top:608.1px;width:4.1px;height:4.1px;border-radius:50%;background:#0f2e5e"></div>
<div style="position:absolute;left:1392px;top:614.7px;width:4.1px;height:4.1px;border-radius:50%;background:#0f2e5e"></div>
<div style="position:absolute;left:275px;top:709.1px;width:1142px;height:1px;background:#e6eaf0;"></div>
<div style="position:absolute;left:282.5px;top:660.9px;width:15px;height:15px;box-sizing:border-box;border:1.5px solid #dde4ec;border-radius:3px"></div>
<div class="t" style="top:659.17px;font-size:14px;font-weight:400;color:#15325f;letter-spacing:-0.156px;left:309.50px;-webkit-text-stroke:0.25px #15325f;">D/A - Document against acceptance</div>
<div class="t" style="top:659.17px;font-size:14px;font-weight:400;color:#15325f;left:567.40px;-webkit-text-stroke:0.25px #15325f;transform:scaleX(0.9617);transform-origin:0 0;">IBC53240126</div>
<div class="t" style="top:659.17px;font-size:14px;font-weight:400;color:#15325f;left:675.80px;-webkit-text-stroke:0.25px #15325f;transform:scaleX(0.9036);transform-origin:0 0;">MUJI</div>
<div class="t" style="top:678.37px;font-size:14px;font-weight:400;color:#15325f;left:675.80px;-webkit-text-stroke:0.25px #15325f;transform:scaleX(0.9169);transform-origin:0 0;">QA-BIZ RM6107897</div>
<div class="t" style="top:659.17px;font-size:14px;font-weight:400;color:#15325f;right:481.00px;-webkit-text-stroke:0.25px #15325f;transform:scaleX(0.9206);transform-origin:100% 0;">2,000.00</div>
<div class="t" style="top:678.37px;font-size:14px;font-weight:400;color:#15325f;right:481.00px;-webkit-text-stroke:0.25px #15325f;transform:scaleX(0.9206);transform-origin:100% 0;">0.00</div>
<div class="t" style="top:659.17px;font-size:14px;font-weight:400;color:#15325f;left:1019.60px;-webkit-text-stroke:0.25px #15325f;transform:scaleX(0.8597);transform-origin:0 0;">USD</div>
<div class="t" style="top:678.37px;font-size:14px;font-weight:400;color:#15325f;left:1019.60px;-webkit-text-stroke:0.25px #15325f;transform:scaleX(0.8597);transform-origin:0 0;">USD</div>
<div class="t" style="top:659.17px;font-size:14px;font-weight:400;color:#15325f;left:1089.30px;-webkit-text-stroke:0.25px #15325f;transform:scaleX(0.9431);transform-origin:0 0;">06 Nov 24</div>
<div class="t" style="top:678.37px;font-size:14px;font-weight:400;color:#15325f;left:1089.30px;-webkit-text-stroke:0.25px #15325f;transform:scaleX(0.9431);transform-origin:0 0;">28 Oct 24</div>
<div style="position:absolute;left:1213px;top:656.3px;width:58.4px;height:22.6px;border-radius:5px;background:#e5f6e9"></div>
<div class="t" style="top:663.44px;font-size:11.2px;font-weight:400;color:#1b9a43;letter-spacing:-0.297px;left:1220.40px;-webkit-text-stroke:0.3px #1b9a43;">CLOSED</div>
<div style="position:absolute;left:1392px;top:659.1px;width:4.1px;height:4.1px;border-radius:50%;background:#0f2e5e"></div>
<div style="position:absolute;left:1392px;top:665.8px;width:4.1px;height:4.1px;border-radius:50%;background:#0f2e5e"></div>
<div style="position:absolute;left:1392px;top:672.4px;width:4.1px;height:4.1px;border-radius:50%;background:#0f2e5e"></div>
<div style="position:absolute;left:282.5px;top:718.6px;width:15px;height:15px;box-sizing:border-box;border:1.5px solid #dde4ec;border-radius:3px"></div>
<div class="t" style="top:716.89px;font-size:14px;font-weight:400;color:#15325f;letter-spacing:-0.156px;left:309.50px;-webkit-text-stroke:0.25px #15325f;">D/A - Document against acceptance</div>
<div class="t" style="top:716.89px;font-size:14px;font-weight:400;color:#15325f;left:567.40px;-webkit-text-stroke:0.25px #15325f;transform:scaleX(0.9617);transform-origin:0 0;">IBC53250149</div>
<div class="t" style="top:716.89px;font-size:14px;font-weight:400;color:#15325f;left:675.80px;-webkit-text-stroke:0.25px #15325f;transform:scaleX(0.8783);transform-origin:0 0;">AWQEFSAD</div>
<div class="t" style="top:736.09px;font-size:14px;font-weight:400;color:#15325f;left:675.80px;-webkit-text-stroke:0.25px #15325f;transform:scaleX(0.9169);transform-origin:0 0;">QA-BIZ RM6107897</div>
<div class="t" style="top:716.89px;font-size:14px;font-weight:400;color:#15325f;right:481.00px;-webkit-text-stroke:0.25px #15325f;transform:scaleX(0.9206);transform-origin:100% 0;">5,200.00</div>
<div class="t" style="top:736.09px;font-size:14px;font-weight:400;color:#15325f;right:481.00px;-webkit-text-stroke:0.25px #15325f;transform:scaleX(0.9206);transform-origin:100% 0;">0.00</div>
<div class="t" style="top:716.89px;font-size:14px;font-weight:400;color:#15325f;left:1019.60px;-webkit-text-stroke:0.25px #15325f;transform:scaleX(0.8597);transform-origin:0 0;">USD</div>
<div class="t" style="top:736.09px;font-size:14px;font-weight:400;color:#15325f;left:1019.60px;-webkit-text-stroke:0.25px #15325f;transform:scaleX(0.8597);transform-origin:0 0;">USD</div>
<div class="t" style="top:716.89px;font-size:14px;font-weight:400;color:#15325f;left:1089.30px;-webkit-text-stroke:0.25px #15325f;transform:scaleX(0.9431);transform-origin:0 0;">18 Mar 25</div>
<div class="t" style="top:736.09px;font-size:14px;font-weight:400;color:#15325f;left:1089.30px;-webkit-text-stroke:0.25px #15325f;transform:scaleX(0.9431);transform-origin:0 0;">18 Mar 25</div>
<div style="position:absolute;left:1213px;top:714.0px;width:38.5px;height:22.6px;border-radius:5px;background:#e5f6e9"></div>
<div class="t" style="top:721.16px;font-size:11.2px;font-weight:400;color:#1b9a43;letter-spacing:-0.297px;left:1220.40px;-webkit-text-stroke:0.3px #1b9a43;">NEW</div>
<div style="position:absolute;left:1392px;top:716.8px;width:4.1px;height:4.1px;border-radius:50%;background:#0f2e5e"></div>
<div style="position:absolute;left:1392px;top:723.5px;width:4.1px;height:4.1px;border-radius:50%;background:#0f2e5e"></div>
<div style="position:absolute;left:1392px;top:730.1px;width:4.1px;height:4.1px;border-radius:50%;background:#0f2e5e"></div>
<div style="position:absolute;left:225px;top:730px;width:1260px;height:141px;background:#f3f5f8;"></div>
<div class="t" style="top:750.90px;font-size:15px;font-weight:400;color:#60738f;letter-spacing:-0.083px;left:256.00px;-webkit-text-stroke:0.25px #60738f;">Row per page:</div>
<div class="t" style="top:750.90px;font-size:15px;font-weight:400;color:#60738f;left:365.20px;-webkit-text-stroke:0.25px #60738f;transform:scaleX(0.8750);transform-origin:0 0;">10</div>
<svg style="position:absolute;left:399px;top:752px" width="12" height="10" viewBox="399 752 12 10" fill="none" stroke="#60738f" stroke-width="1.4" stroke-linecap="round" stroke-linejoin="round"><path d="M401.5 755 L405.5 759.5 L409.5 755"/></svg>
<div class="t" style="top:750.90px;font-size:15px;font-weight:400;color:#60738f;letter-spacing:-0.111px;left:428.50px;-webkit-text-stroke:0.25px #60738f;">1-10 of 36</div>
<div style="position:absolute;left:1231.8px;top:738.5px;width:27.2px;height:38px;background:#e0eafd;"></div>
<div class="tc" style="left:1235.4px;width:20px;text-align:center;top:751.60px;font-size:13px;color:#0050f0;-webkit-text-stroke:0.3px #0050f0">1</div>
<div class="tc" style="left:1271px;width:20px;text-align:center;top:751.60px;font-size:13px;color:#60738f;-webkit-text-stroke:0.3px #60738f">2</div>
<div class="tc" style="left:1308.3px;width:20px;text-align:center;top:751.60px;font-size:13px;color:#60738f;-webkit-text-stroke:0.3px #60738f">3</div>
<div class="tc" style="left:1345.8px;width:20px;text-align:center;top:751.60px;font-size:13px;color:#60738f;-webkit-text-stroke:0.3px #60738f">4</div>
<svg style="position:absolute;left:1199px;top:751px" width="12" height="14" viewBox="1199 751 12 14" fill="none" stroke="#c5cdd8" stroke-width="1.4" stroke-linecap="round" stroke-linejoin="round"><path d="M1206.5 753 L1202 757.8 L1206.5 762.6"/></svg>
<svg style="position:absolute;left:1393px;top:751px" width="12" height="14" viewBox="1393 751 12 14" fill="none" stroke="#60738f" stroke-width="1.4" stroke-linecap="round" stroke-linejoin="round"><path d="M1395.8 753 L1400.3 757.8 L1395.8 762.6"/></svg>
<div style="position:absolute;left:225px;top:782.5px;width:1260px;height:3px;background:#e1e5ea;"></div>
<div style="position:absolute;left:225px;top:785.5px;width:1260px;height:90px;background:#fff;"></div>
<svg style="position:absolute;left:272px;top:805px" width="21" height="22" viewBox="272 805 21 22" fill="none" stroke="#b7c2d1" stroke-width="1.5" stroke-linecap="round" stroke-linejoin="round"><path d="M286 824.8 H277.6 A1.8 1.8 0 0 1 275.8 823 V809.5 A1.8 1.8 0 0 1 277.6 807.7 H284.5 L289.5 812.7 V823 A1.8 1.8 0 0 1 287.7 824.8 Z"/><path d="M284.3 808 V812.8 H289.3"/><path d="M282.6 815 V821 M280 818.5 L282.6 821 L285.2 818.5"/></svg>
<div class="t" style="top:809.90px;font-size:15px;font-weight:700;color:#b5c0cf;letter-spacing:-0.428px;left:305.90px;">Download</div>
</div>
<div style="position:absolute;left:331.5px;top:77px;width:1029px;height:78px;box-sizing:border-box;border:1.5px solid #4fb56a;border-radius:12px;background:#d3f4dc;box-shadow:0 13px 22px rgba(0,0,0,0.19)"></div>
<svg style="position:absolute;left:357px;top:101px" width="30" height="30" viewBox="357 101 30 30" fill="none" stroke="#22b04b" stroke-width="1.9" stroke-linecap="round" stroke-linejoin="round"><circle cx="372.3" cy="115.7" r="12.6"/><path d="M367.4 115.8 L370.9 119 L377.6 112.6"/></svg>
<div class="t" style="top:97.53px;font-size:14.5px;font-weight:700;color:#0d2d5e;letter-spacing:0.004px;left:405.30px;">Submitted Successfully</div>
<div class="t" style="top:128.63px;font-size:14.5px;font-weight:400;color:#6a7fa0;letter-spacing:0.493px;left:405.30px;-webkit-text-stroke:0.25px #6a7fa0;">Application has been Submitted, your request has been sent pending processing to My Application.</div>
<div class="t" style="top:97.73px;font-size:14.5px;font-weight:700;color:#0a50f0;letter-spacing:0.133px;left:1152.00px;">Go to My Application</div>
<div style="position:absolute;left:1316.8px;top:96.2px;width:17px;height:17px;border-radius:50%;background:#0b2a5a"></div>
<svg style="position:absolute;left:1319px;top:99px" width="12" height="12" viewBox="1319 99 12 12" fill="none" stroke="#fff" stroke-width="1.5" stroke-linecap="round" stroke-linejoin="round"><path d="M1322.8 102.2 L1327.8 107.2 M1327.8 102.2 L1322.8 107.2"/></svg>
</body></html>
